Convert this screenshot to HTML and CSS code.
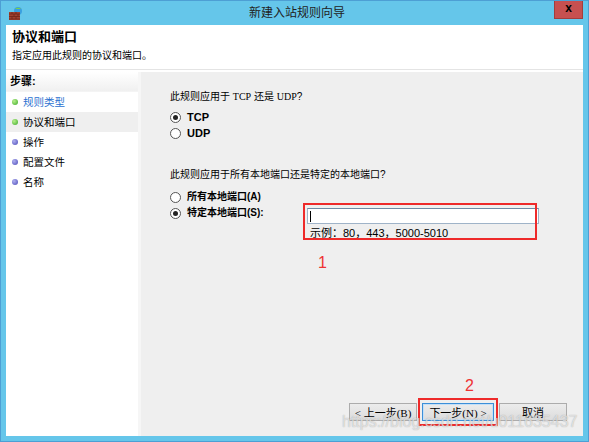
FILE: index.html
```html
<!DOCTYPE html>
<html>
<head>
  <title>新建入站规则向导</title>
  <link rel="stylesheet" href="styles.css">
</head>
<body>
  <div class="window">
    <div class="titlebar">
      <svg class="app-icon" width="16" height="16" viewBox="0 0 16 16">
        <circle cx="10" cy="5" r="4" fill="#3aa0e0"/>
        <path d="M7 3 a4 4 0 0 1 6 0" fill="#7cd04a"/>
        <rect x="1" y="6" width="11" height="8" fill="#a0412f"/>
        <path d="M1 8h11M1 10.5h11M1 13h11M4 6v2M8 6v2M6 8v2.5M10 8v2.5M4 10.5v2.5M8 10.5v2.5" stroke="#6e2418" stroke-width="0.8"/>
      </svg>
      <div class="title">新建入站规则向导</div>
      <div class="close">x</div>
    </div>

    <div class="client">
      <div class="header">
        <h1>协议和端口</h1>
        <p>指定应用此规则的协议和端口。</p>
      </div>

      <div class="main">
        <div class="steps">
          <div class="steps-head">步骤:</div>
          <div class="step done"><span class="dot green"></span><span class="link">规则类型</span></div>
          <div class="step current"><span class="dot green"></span>协议和端口</div>
          <div class="step"><span class="dot blue"></span>操作</div>
          <div class="step"><span class="dot blue"></span>配置文件</div>
          <div class="step"><span class="dot blue"></span>名称</div>
        </div>
        <div class="divider"></div>

        <div class="page">
          <div class="content">
            <div class="question">此规则应用于 <span class="mono">TCP</span> 还是 <span class="mono">UDP</span>?</div>
            <div class="option"><span class="radio checked"></span><b class="proto">TCP</b></div>
            <div class="option"><span class="radio"></span><b class="proto">UDP</b></div>

            <div class="question second">此规则应用于所有本地端口还是特定的本地端口?</div>
            <div class="option"><span class="radio"></span><b>所有本地端口(A)</b></div>
            <div class="option port-row">
              <span class="radio checked"></span><b class="port-label">特定本地端口(S):</b>
              <div class="port-box">
                <div class="textbox"><span class="caret"></span></div>
                <div class="hint">示例：80，443，5000-5010</div>
                <div class="mark mark-input"></div>
              </div>
            </div>
            <div class="note-one">1</div>
          </div>

          <div class="footer">
            <button class="btn">&lt; 上一步(B)</button>
            <button class="btn default">下一步(N) &gt;
              <span class="note-two">2</span>
              <span class="mark mark-next"></span>
            </button>
            <button class="btn">取消</button>
          </div>
        </div>
      </div>
    </div>
    <div class="watermark">https://blog.csdn.net/u011635437</div>
  </div>
</body>
</html>
```

FILE: styles.css
```css
body {
  margin: 0;
  font-family: "Liberation Sans", "Noto Sans CJK SC", sans-serif;
  font-size: 10px;
  color: #000;
}

.window {
  position: relative;
  width: 589px;
  height: 442px;
  box-sizing: border-box;
  background: #65c6ea;
  border: 1px solid #4d9fd4;
  display: flex;
  flex-direction: column;
  overflow: hidden;
}

.titlebar {
  height: 24px;
  display: flex;
  align-items: flex-start;
}

.app-icon {
  margin: 5px 0 0 7px;
}

.title {
  flex: 1;
  text-align: center;
  font-size: 12px;
  line-height: 24px;
  color: #222;
  padding-left: 16px;
}

.close {
  width: 27px;
  height: 18px;
  margin-right: 5px;
  margin-top: -1px;
  background: #c75050;
  border: 1px solid #a33d3d;
  border-top: none;
  color: #000;
  font-weight: bold;
  font-size: 12px;
  line-height: 16px;
  text-align: center;
}

.client {
  flex: 1;
  margin: 0 5px 5px 5px;
  display: flex;
  flex-direction: column;
  background: #fff;
}

.header {
  height: 44px;
  background: #fff;
  padding-left: 6px;
  border-bottom: 1px solid #e4e4e4;
}

.header h1 {
  margin: 0;
  padding-top: 3px;
  font-size: 13px;
  line-height: 18px;
  font-weight: bold;
}

.header p {
  margin: 0;
  padding-top: 2px;
  font-size: 10px;
  line-height: 16px;
}

.main {
  flex: 1;
  display: flex;
  margin-top: 2px;
}

.steps {
  width: 132px;
  background: #fff;
}

.steps-head {
  height: 19px;
  line-height: 19px;
  padding-left: 4px;
  font-size: 11px;
  font-weight: bold;
  background: linear-gradient(#ffffff, #f0f0f0);
  border-bottom: 1px solid #f4f4f4;
}

.step {
  height: 20px;
  line-height: 20px;
  padding-left: 6px;
  font-size: 10.5px;
  display: flex;
  align-items: center;
}

.step.current {
  background: #efefef;
}

.link {
  color: #2a6fd0;
}

.dot {
  width: 6px;
  height: 6px;
  border-radius: 50%;
  margin-right: 5px;
}

.dot.green {
  background: radial-gradient(circle at 35% 35%, #b8f08a, #3aa82a);
}

.dot.blue {
  background: radial-gradient(circle at 35% 35%, #b0b0f0, #4a4ab8);
}

.divider {
  width: 3px;
  background: #f6f6f6;
}

.page {
  flex: 1;
  background: #efefef;
  display: flex;
  flex-direction: column;
}

.content {
  position: relative;
  padding: 17px 0 0 29px;
}

.question {
  line-height: 16px;
  margin-bottom: 4px;
}

.question.second {
  margin-top: 26px;
  margin-bottom: 6px;
}

.mono {
  font-family: "Liberation Serif", serif;
  font-size: 10px;
}

.option {
  display: flex;
  align-items: center;
  height: 16px;
  line-height: 16px;
}

.option b {
  font-weight: bold;
}

.option .proto {
  font-size: 11px;
}

.radio {
  width: 9px;
  height: 9px;
  border: 1px solid #555;
  border-radius: 50%;
  background: #fff;
  margin-right: 6px;
  position: relative;
  flex: none;
}

.radio.checked::after {
  content: "";
  position: absolute;
  left: 2px;
  top: 2px;
  width: 5px;
  height: 5px;
  border-radius: 50%;
  background: #222;
}

.port-row {
  align-items: flex-start;
}

.port-row .radio {
  margin-top: 3px;
}

.port-label {
  width: 120px;
  line-height: 16px;
}

.port-box {
  position: relative;
  margin-top: 3px;
}

.textbox {
  width: 226px;
  height: 14px;
  background: #fff;
  border: 1px solid #9fb3c8;
  border-top-color: #6f8aa5;
  padding: 0 2px;
}

.caret {
  display: inline-block;
  width: 1px;
  height: 11px;
  margin-top: 2px;
  background: #000;
}

.hint {
  padding: 2px 0 0 3px;
  line-height: 14px;
  font-size: 11px;
}

.mark {
  position: absolute;
  border: 2px solid #ee2a2a;
}

.mark-input {
  left: -4px;
  top: -5px;
  width: 230px;
  height: 33px;
}

.note-one {
  position: absolute;
  left: 177px;
  top: 183px;
  color: #ee3333;
  font-size: 16px;
  line-height: 16px;
}

.footer {
  margin-top: auto;
  display: flex;
  justify-content: flex-end;
  gap: 5px;
  padding: 0 16px 15px 0;
}

.btn {
  position: relative;
  height: 18px;
  width: 68px;
  padding: 0;
  font-family: "Liberation Serif", "Noto Sans CJK SC", serif;
  font-size: 11px;
  color: #000;
  background: linear-gradient(#ececec, #dcdcdc);
  border: 1px solid #acacac;
}

.btn.default {
  width: 72px;
  border-color: #3c8fd8;
  box-shadow: inset 0 0 0 1px #c4e0f8;
}

.mark-next {
  left: -5px;
  top: -6px;
  width: 76px;
  height: 24px;
}

.note-two {
  position: absolute;
  left: 42px;
  top: -26px;
  color: #ee3333;
  font-family: "Liberation Sans", sans-serif;
  font-size: 16px;
  line-height: 16px;
}

.watermark {
  position: absolute;
  left: 341px;
  top: 412px;
  font-family: "Liberation Sans", sans-serif;
  font-size: 16px;
  color: rgba(255, 255, 255, 0.6);
  text-shadow: 0 0 1px rgba(110, 110, 110, 0.6);
  pointer-events: none;
}
```
